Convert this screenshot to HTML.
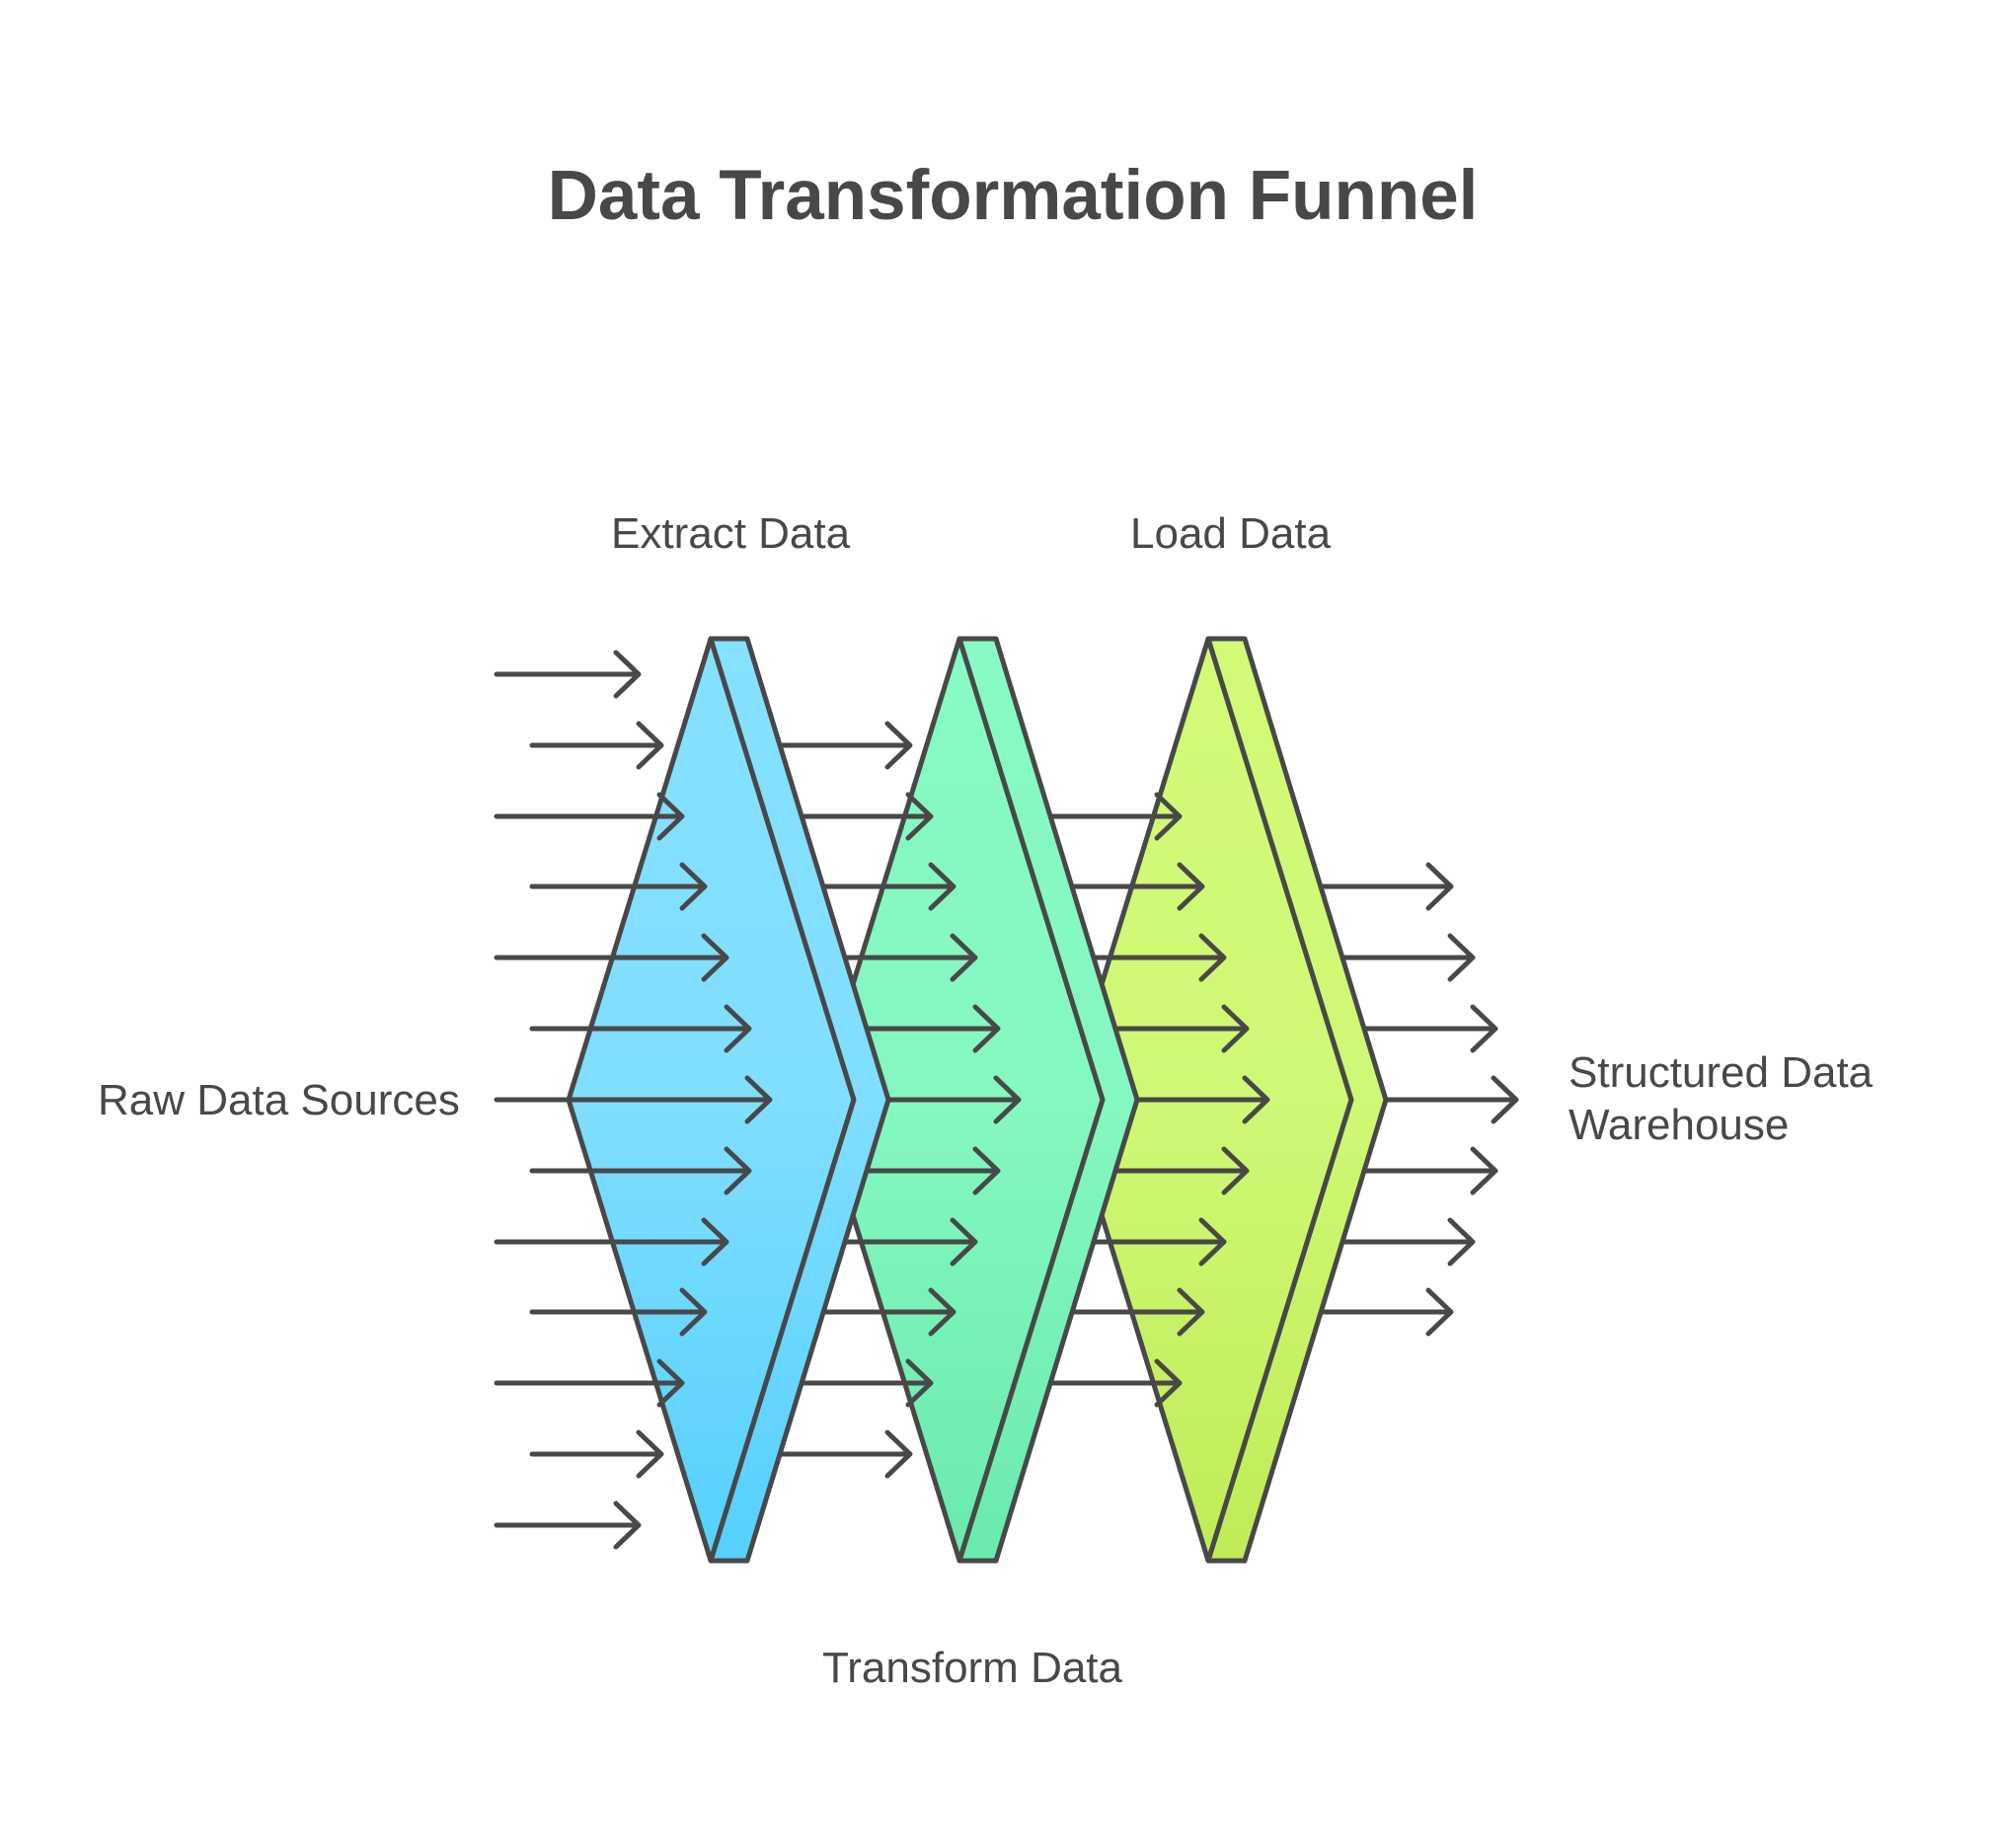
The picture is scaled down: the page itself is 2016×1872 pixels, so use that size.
<!DOCTYPE html>
<html><head><meta charset="utf-8"><style>
html,body{margin:0;padding:0;background:#fff;}
svg{display:block;}
text{font-family:"Liberation Sans",sans-serif;fill:#484848;}
</style></head><body>
<svg width="2016" height="1872" viewBox="0 0 2016 1872" xmlns="http://www.w3.org/2000/svg">
<defs>
<linearGradient id="gb" x1="0" y1="0" x2="0" y2="1"><stop offset="0" stop-color="#86E0FF"/><stop offset="0.5" stop-color="#80DEFF"/><stop offset="1" stop-color="#56D0FE"/></linearGradient>
<linearGradient id="gg" x1="0" y1="0" x2="0" y2="1"><stop offset="0" stop-color="#88FAC4"/><stop offset="0.5" stop-color="#84F8C0"/><stop offset="1" stop-color="#6AEAAE"/></linearGradient>
<linearGradient id="gy" x1="0" y1="0" x2="0" y2="1"><stop offset="0" stop-color="#D2FA76"/><stop offset="0.5" stop-color="#CFF874"/><stop offset="1" stop-color="#C0EC58"/></linearGradient>
</defs>
<text x="1026" y="222" font-size="71" font-weight="bold" text-anchor="middle">Data Transformation Funnel</text>
<text x="619" y="555" font-size="44">Extract Data</text>
<text x="1145" y="555" font-size="44">Load Data</text>
<text x="833" y="1704" font-size="44">Transform Data</text>
<text x="99" y="1129" font-size="44">Raw Data Sources</text>
<text x="1589" y="1101" font-size="44">Structured Data</text>
<text x="1589" y="1154" font-size="44">Warehouse</text>
<g fill="none" stroke="#484848" stroke-width="5" stroke-linecap="round" stroke-linejoin="round">
<path d="M1300 898H1470M1447 876L1470 898L1447 920"/>
<path d="M1300 970H1492M1469 948L1492 970L1469 992"/>
<path d="M1300 1042H1515M1492 1020L1515 1042L1492 1064"/>
<path d="M1300 1114H1536M1513 1092L1536 1114L1513 1136"/>
<path d="M1300 1186H1515M1492 1164L1515 1186L1492 1208"/>
<path d="M1300 1258H1492M1469 1236L1492 1258L1469 1280"/>
<path d="M1300 1329H1470M1447 1307L1470 1329L1447 1351"/>
</g>
<g stroke="#484848" stroke-width="5" stroke-linejoin="round">
<path d="M1224 647L1369 1114L1224 1581L1080 1114Z" fill="url(#gy)"/>
<path d="M1224 647H1261L1404 1114L1261 1581H1224L1369 1114Z" fill="url(#gy)"/>
</g>
<g fill="none" stroke="#484848" stroke-width="5" stroke-linecap="round" stroke-linejoin="round">
<path d="M1050 827H1195M1172 805L1195 827L1172 849"/>
<path d="M1050 898H1218M1195 876L1218 898L1195 920"/>
<path d="M1050 970H1240M1217 948L1240 970L1217 992"/>
<path d="M1050 1042H1263M1240 1020L1263 1042L1240 1064"/>
<path d="M1050 1114H1284M1261 1092L1284 1114L1261 1136"/>
<path d="M1050 1186H1263M1240 1164L1263 1186L1240 1208"/>
<path d="M1050 1258H1240M1217 1236L1240 1258L1217 1280"/>
<path d="M1050 1329H1218M1195 1307L1218 1329L1195 1351"/>
<path d="M1050 1401H1195M1172 1379L1195 1401L1172 1423"/>
</g>
<g stroke="#484848" stroke-width="5" stroke-linejoin="round">
<path d="M972 647L1117 1114L972 1581L828 1114Z" fill="url(#gg)"/>
<path d="M972 647H1009L1152 1114L1009 1581H972L1117 1114Z" fill="url(#gg)"/>
</g>
<g fill="none" stroke="#484848" stroke-width="5" stroke-linecap="round" stroke-linejoin="round">
<path d="M760 755H922M899 733L922 755L899 777"/>
<path d="M760 827H943M920 805L943 827L920 849"/>
<path d="M760 898H966M943 876L966 898L943 920"/>
<path d="M760 970H988M965 948L988 970L965 992"/>
<path d="M760 1042H1011M988 1020L1011 1042L988 1064"/>
<path d="M760 1114H1032M1009 1092L1032 1114L1009 1136"/>
<path d="M760 1186H1011M988 1164L1011 1186L988 1208"/>
<path d="M760 1258H988M965 1236L988 1258L965 1280"/>
<path d="M760 1329H966M943 1307L966 1329L943 1351"/>
<path d="M760 1401H943M920 1379L943 1401L920 1423"/>
<path d="M760 1473H922M899 1451L922 1473L899 1495"/>
</g>
<g stroke="#484848" stroke-width="5" stroke-linejoin="round">
<path d="M720 647L865 1114L720 1581L576 1114Z" fill="url(#gb)"/>
<path d="M720 647H757L900 1114L757 1581H720L865 1114Z" fill="url(#gb)"/>
</g>
<g fill="none" stroke="#484848" stroke-width="5" stroke-linecap="round" stroke-linejoin="round">
<path d="M503 683H647M624 661L647 683L624 705"/>
<path d="M539 755H670M647 733L670 755L647 777"/>
<path d="M503 827H691M668 805L691 827L668 849"/>
<path d="M539 898H714M691 876L714 898L691 920"/>
<path d="M503 970H736M713 948L736 970L713 992"/>
<path d="M539 1042H759M736 1020L759 1042L736 1064"/>
<path d="M503 1114H780M757 1092L780 1114L757 1136"/>
<path d="M539 1186H759M736 1164L759 1186L736 1208"/>
<path d="M503 1258H736M713 1236L736 1258L713 1280"/>
<path d="M539 1329H714M691 1307L714 1329L691 1351"/>
<path d="M503 1401H691M668 1379L691 1401L668 1423"/>
<path d="M539 1473H670M647 1451L670 1473L647 1495"/>
<path d="M503 1545H647M624 1523L647 1545L624 1567"/>
</g>
</svg>
</body></html>
